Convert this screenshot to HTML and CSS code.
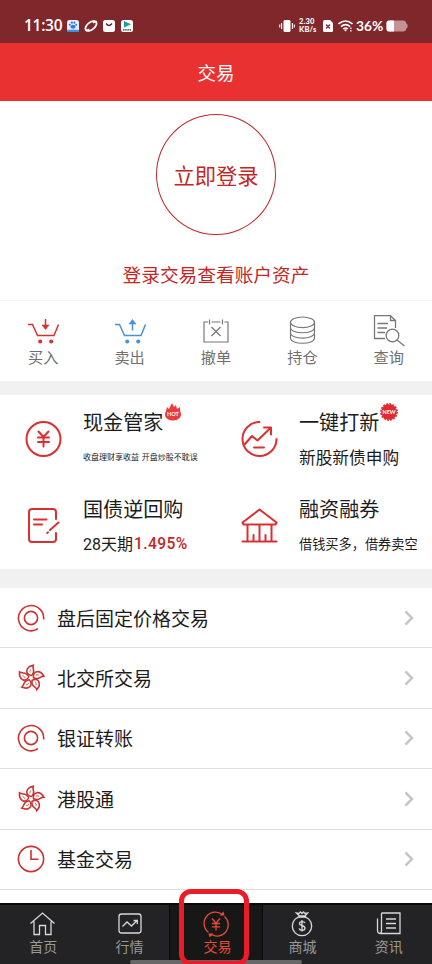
FILE: index.html
```html
<!DOCTYPE html>
<html lang="zh-CN">
<head>
<meta charset="utf-8">
<meta name="viewport" content="width=device-width, initial-scale=1">
<title>交易</title>
<link rel="stylesheet" href="styles.css">
</head>
<body>
<svg class="defs" width="0" height="0">
  <symbol id="ring" viewBox="0 0 28 28"><path d="M26.600 15.500A12.600 12.600 0 1 0 21 24.700"/><circle cx="14" cy="14" r="6.600"/></symbol>
  <symbol id="flower" viewBox="0 0 28 28">
    <g id="petal"><path d="M14.500 11.500C7.500 10.500 8.500 2.800 16.200 1.200C14.800 4.800 19.300 7 14.500 11.500Z"/><path class="fine" d="M13 8.500C12.600 7.300 13 6.300 14 5.500"/></g>
    <use href="#petal" transform="rotate(72 14 14)"/><use href="#petal" transform="rotate(144 14 14)"/><use href="#petal" transform="rotate(216 14 14)"/><use href="#petal" transform="rotate(288 14 14)"/>
  </symbol>
  <symbol id="chevron" viewBox="0 0 10 16"><path d="M1.500 1.500L8 8L1.500 14.500"/></symbol>
</svg>
<div class="phone">
  <div class="status">
    <span class="time">11:30</span>
    <svg class="apps" width="68" height="14" viewBox="0 0 68 14">
      <rect x="1" y="1" width="12" height="12" rx="2.500" fill="#e4efff"/><rect x="1" y="10.800" width="12" height="2.200" rx="1" fill="#438bea"/><ellipse cx="7" cy="7.800" rx="2.600" ry="2" fill="#357bd9"/><g fill="#357bd9"><circle cx="3.800" cy="5.800" r="1"/><circle cx="5.800" cy="3.700" r="1.100"/><circle cx="8.300" cy="3.700" r="1.100"/><circle cx="10.200" cy="5.800" r="1"/></g>
      <ellipse cx="25" cy="7" rx="6.500" ry="3.600" transform="rotate(-38 25 7)" fill="none" stroke="#fff" stroke-width="1.800"/><path d="M19.500 11.500C21 11.500 22 11 23 10M27 4C28.500 3 30 2.500 31 2.500" fill="none" stroke="#fff" stroke-width="1.500"/>
      <rect x="37" y="1" width="12" height="12" rx="2.500" fill="#fff"/><path d="M40 4.500Q43 8.500 46 4.500" fill="none" stroke="#6b2228" stroke-width="1.400"/>
      <rect x="55" y="1" width="12" height="12" rx="2.500" fill="#fff"/><path d="M58 2L65 5.300L58 8.600Z" fill="#21ac63"/><path d="M58 2L60 5.300L58 8.600Z" fill="#168fd8"/><path d="M57 10.800h8" stroke="#666" stroke-width="1.800" stroke-dasharray="1.500 .7"/>
    </svg>
    <svg class="vibrate" width="16" height="14" viewBox="0 0 16 14"><rect x="4.500" y="1" width="7" height="12" rx="1.500" fill="#fff"/><path d="M2.600 4v6M.7 5.500v3M13.400 4v6M15.300 5.500v3" stroke="#fff" stroke-width="1.100"/></svg>
    <span class="speed"><b>2.30</b><b>KB/s</b></span>
    <svg class="sim" width="10" height="12" viewBox="0 0 10 12"><path d="M2 0H7L10 3V10.500Q10 12 8.500 12H1.500Q0 12 0 10.500V2Q0 0 2 0Z" fill="#fff"/><path d="M3 4.500L7 8.500M7 4.500L3 8.500" stroke="#80272c" stroke-width="1.300"/></svg>
    <svg class="wifi" width="15" height="12" viewBox="0 0 15 12"><g fill="none" stroke="#fff" stroke-width="1.600"><path d="M.5 4Q7.500-2 14.500 4M3 6.600Q7.500 2.700 12 6.600M5.200 9Q7.500 7 9.800 9"/></g><path d="M5.800 9.700L7.500 11.500L9.200 9.700Q7.500 8.700 5.800 9.700Z" fill="#fff"/><path d="M12.800 7.500v4" stroke="#fff" stroke-width="1.400" stroke-dasharray="1.500 1"/></svg>
    <span class="percent">36%</span>
    <svg class="battery" width="22" height="12" viewBox="0 0 22 12"><path d="M3 .5H17Q20 .5 20.200 3.200L21.500 4.500V7.500L20.200 8.800Q20 11.500 17 11.500H3Q.5 11.500 .5 9V3Q.5 .5 3 .5Z" fill="#c49295"/><path d="M8 .5H3Q.5 .5 .5 3V9Q.5 11.500 3 11.500H8Z" fill="#fff"/></svg>
  </div>
  <header class="title">交易</header>

  <section class="login">
    <div class="login-button">立即登录</div>
    <p class="login-note">登录交易查看账户资产</p>
  </section>

  <nav class="shortcuts">
    <div class="shortcut"><svg width="34" height="34" viewBox="0 0 34 34" fill="none" stroke="#d8302f" stroke-width="1.500"><path d="M2 10.500H6.500L11.500 21.500H28L32.500 10.500"/><path d="M19.500 5V11"/><path d="M16 11H23L19.500 15.500Z" fill="#d8302f" stroke-width=".6"/><g fill="#d8302f" stroke="none"><circle cx="14.200" cy="27.500" r="2"/><circle cx="25.200" cy="27.500" r="2"/></g></svg><span>买入</span></div>
    <div class="shortcut"><svg width="34" height="34" viewBox="0 0 34 34" fill="none" stroke="#4a90d9" stroke-width="1.500"><path d="M2 10.500H6.500L11.500 21.500H28L32.500 10.500"/><path d="M19.500 9.500V16.500"/><path d="M16 10H23L19.500 5.500Z" fill="#4a90d9" stroke-width=".6"/><g fill="#4a90d9" stroke="none"><circle cx="14.200" cy="27.500" r="2"/><circle cx="25.200" cy="27.500" r="2"/></g></svg><span>卖出</span></div>
    <div class="shortcut"><svg width="34" height="34" viewBox="0 0 34 34" fill="none" stroke="#777" stroke-width="1.200"><path d="M9 8H5V28H29V8H25.500M12.500 8H21.500M10.500 5.500V10.500M23.500 5.500V10.500M12.500 13L21.500 22M21.500 13L12.500 22"/></svg><span>撤单</span></div>
    <div class="shortcut"><svg width="34" height="34" viewBox="0 0 34 34" fill="none" stroke="#777" stroke-width="1.200"><g transform="translate(0 1.500)"><ellipse cx="17.500" cy="6.800" rx="12" ry="5.300"/><path d="M5.500 6.800V22.500C5.500 29.500 29.500 29.500 29.500 22.500V6.800M5.500 12C5.500 19 29.500 19 29.500 12M5.500 17.300C5.500 24.300 29.500 24.300 29.500 17.300"/></g></svg><span>持仓</span></div>
    <div class="shortcut"><svg width="34" height="34" viewBox="0 0 34 34" fill="none" stroke="#777" stroke-width="1.300"><g transform="translate(0 1)"><path d="M13 23.500H2.500V.7H18.500L23.500 5.500V13M18.500 .7V5.500H23.500M5.500 8.500H16M5.500 13H15M5.500 17.500H13"/><circle cx="20.500" cy="20.500" r="6.300"/><path d="M25 25L32.500 31"/></g></svg><span>查询</span></div>
  </nav>

  <section class="features">
    <article class="feature">
      <svg class="feature-icon" viewBox="0 0 38 38"><circle cx="19.500" cy="19" r="17"/><path d="M14.500 11.500L19.500 17L24.500 11.500M19.500 17V26.500M14 17.500H25M14 22H25"/></svg>
      <div class="feature-text"><h2>现金管家<svg class="badge" width="18" height="20" viewBox="0 0 18 20"><path d="M3 4L5 6L8 0L10 4L12 2L13 6L16 4V8C19 13 15 17.500 9 17.500S-1 13 2 8Z" fill="#ed3b3b"/><text x="9" y="12.500">HOT</text></svg></h2><p class="tiny">收盘理财享收益 开盘炒股不耽误</p></div>
    </article>
    <article class="feature">
      <svg class="feature-icon" viewBox="0 0 38 38"><path d="M19.500 2A17 17 0 1 0 36.500 19M5 24L12 16L17.500 20.500L30.500 8M24 7.500H31V14.500M14 27.500H24"/></svg>
      <div class="feature-text"><h2>一键打新<svg class="badge" width="18" height="20" viewBox="0 0 18 20"><circle cx="9" cy="9" r="7.800" fill="#df2d2f"/><circle cx="9" cy="9" r="8.100" fill="none" stroke="#df2d2f" stroke-width="1.600" stroke-dasharray="2 1.180"/><text x="9" y="11">NEW</text></svg></h2><p class="large">新股新债申购</p></div>
    </article>
    <article class="feature">
      <svg class="feature-icon" viewBox="0 0 38 38"><path d="M32 12V5Q32 2 29 2H8Q5 2 5 5V32Q5 35 8 35H29Q32 35 32 32V26M10 12.500H22.500M10 17.500H18M26 23L34.500 15.500M23.200 26L24 25.300"/></svg>
      <div class="feature-text"><h2>国债逆回购</h2><p class="rate">28天期<strong>1.495%</strong></p></div>
    </article>
    <article class="feature">
      <svg class="feature-icon" viewBox="0 0 38 38"><path d="M2.500 34.500H36.500M3.500 17.500H35.500L36.500 15.500L19.500 2.500L2.500 15.500ZM7.500 18V34M31.500 18V34M19.500 18V34M13.500 28V34M25.500 28V34"/></svg>
      <div class="feature-text"><h2>融资融券</h2><p class="small">借钱买多，借券卖空</p></div>
    </article>
  </section>

  <main class="list">
    <div class="row"><svg class="row-icon"><use href="#ring"/></svg><span>盘后固定价格交易</span><svg class="arrow"><use href="#chevron"/></svg></div>
    <div class="row"><svg class="row-icon"><use href="#flower"/></svg><span>北交所交易</span><svg class="arrow"><use href="#chevron"/></svg></div>
    <div class="row"><svg class="row-icon"><use href="#ring"/></svg><span>银证转账</span><svg class="arrow"><use href="#chevron"/></svg></div>
    <div class="row"><svg class="row-icon"><use href="#flower"/></svg><span>港股通</span><svg class="arrow"><use href="#chevron"/></svg></div>
    <div class="row"><svg class="row-icon" viewBox="0 0 28 28"><circle cx="14" cy="14" r="12.600"/><path d="M14 5V14.300H21.500"/></svg><span>基金交易</span><svg class="arrow"><use href="#chevron"/></svg></div>
  </main>

  <nav class="tabs">
    <div class="tab"><svg viewBox="0 0 28 28"><path d="M1.500 13.500L13.500 3L25.500 13.500M5 11.500V24.500H10.500V15.500H16.500V24.500H22V11.500"/></svg><span>首页</span></div>
    <div class="tab"><svg viewBox="0 0 28 28"><rect x="3" y="4" width="22" height="19" rx="2.500"/><path d="M6.500 16.500L11 12L15.500 16L21 10.500M17.500 10.500H21.300V14"/></svg><span>行情</span></div>
    <div class="tab current"><svg viewBox="0 0 28 28"><path d="M20.500 4.500A11.200 11.200 0 0 0 6.500 22.500M9 24.300A11.200 11.200 0 0 0 22.500 6.500M10 8.500L14 13L18 8.500M14 13V20.500M10 13.500H18M10 16.800H18"/><path class="head" d="M17.500 5.500L22.500 5.500L21.500 1.500ZM11.500 23.500H6.500L7.500 27.500Z"/></svg><span>交易</span></div>
    <div class="tab"><svg viewBox="0 0 28 28"><circle cx="14" cy="16" r="9.700"/><path d="M8.500 3L11.500 6H17L19.500 3L17 3.500L15.500 2L14 3.500L12.500 2L11 3.500ZM10.500 7H18M17 13C16 11 11.500 11 11.500 13.500C11.500 16.500 17 15 17 18C17 21 12 21 11 18.500M14 10V21.500"/></svg><span>商城</span></div>
    <div class="tab"><svg viewBox="0 0 28 28"><path d="M6.500 3H25V23.500H5.500Q2.500 23.500 2.500 20.500V8.500M6.500 3V20.500Q6.500 23.500 4.500 23.500M11 9H21M11 13.500H21M11 18H21"/></svg><span>资讯</span></div>
    <i class="home-bar"></i>
    <i class="highlight"></i>
  </nav>
</div>
</body>
</html>
```

FILE: styles.css
```css
* { box-sizing: border-box; }
body { margin: 0; background: #fff; font-family: "Noto Sans CJK SC", sans-serif; color: #1c1c1c; }
h2, p { margin: 0; font-weight: 400; }
svg { flex: none; display: block; }
.defs { position: absolute; }
.phone { width: 432px; height: 964px; overflow: hidden; display: flex; flex-direction: column; }
.phone > * { flex: none; }

.status { height: 43px; padding: 8px 24px 0 24px; display: flex; align-items: center; background: #80272c; color: #fff; font-family: Lato, sans-serif; }
.time { width: 42px; font-family: "Open Sans", sans-serif; font-size: 15.500px; font-weight: 600; line-height: 20px; letter-spacing: -.3px; margin-top: -1px; white-space: nowrap; }
.vibrate { margin-left: auto; }
.speed { width: 19px; margin-left: 4px; display: flex; flex-direction: column; gap: 1px; font-size: 7.500px; line-height: 7px; letter-spacing: .2px; white-space: nowrap; }
.speed b { height: 7px; font-weight: 900; }
.sim { margin-left: 5px; }
.wifi { margin-left: 5px; }
.percent { width: 27px; margin: 0 3px 0 3px; font-size: 13.800px; font-weight: 700; line-height: 20px; }

.title { height: 58px; background: #e93131; color: #fff; font-size: 18.500px; line-height: 59px; text-align: center; }

.login { height: 200px; padding-top: 13px; display: flex; flex-direction: column; align-items: center; border-bottom: 1px solid #f3f3f3; }
.login-button { width: 120px; height: 121px; border: 1.500px solid #bf2b2b; border-radius: 50%; color: #c42626; font-size: 21.300px; line-height: 119px; text-align: center; box-shadow: 0 1px 3px #0000000d; }
.login-note { margin-top: 24px; color: #c42626; font-size: 18.700px; line-height: 30px; }

.shortcuts { height: 80px; padding-top: 13px; display: grid; grid-template-columns: repeat(5, 1fr); }
.shortcut { display: flex; flex-direction: column; align-items: center; font-size: 15.200px; line-height: 20px; color: #707070; }
.shortcut span { margin-top: -2px; }

.features { height: 207px; border-top: 14px solid #f1f1f1; border-bottom: 19px solid #f1f1f1; display: grid; grid-template-columns: 216px 216px; grid-template-rows: 87px 87px; }
.feature { display: flex; align-items: flex-start; padding-left: 24px; }
.feature-icon { width: 38px; height: 38px; margin-top: 25px; fill: none; stroke: #dc3030; stroke-width: 2; stroke-linecap: round; stroke-linejoin: round; }
.feature-text { margin-left: 21px; padding-top: 12px; white-space: nowrap; }
.feature h2 { display: flex; font-size: 20.100px; line-height: 29px; height: 30px; }
.feature p { height: 30px; margin-top: 5px; line-height: 30px; }
.badge { margin: -4px 0 0 1px; overflow: visible; }
.badge text { fill: #fff; font: 700 5.500px Lato, sans-serif; text-anchor: middle; }
.feature .tiny { font-size: 8px; line-height: 29px; word-spacing: 1px; }
.large { font-size: 16.700px; }
.small { font-size: 13.200px; }
.feature .rate { display: flex; font-family: Roboto, "Noto Sans CJK SC", sans-serif; font-size: 16px; font-weight: 400; line-height: 31px; }
.rate strong { margin-left: 1px; color: #c42626; font-size: 15.600px; font-weight: 500; letter-spacing: .4px; }

.list { display: grid; grid-auto-rows: 60.400px; height: 315px; }
.row { display: flex; align-items: center; padding: 0 18px 0 17px; border-bottom: 1px solid #dedede; font-size: 19px; }
.row span { margin-top: -1px; }
.row-icon { width: 28px; height: 28px; margin-right: 12px; fill: none; stroke: #cb3333; stroke-width: 1.600; }
.fine { stroke-width: .8; }
.arrow { width: 10px; height: 16px; margin-left: auto; fill: none; stroke: #c6c6c6; stroke-width: 2.500; }

.tabs { position: relative; height: 61px; display: grid; grid-template-columns: repeat(5, 1fr); background: #232325; border-top: 2px solid #080808; }
.tab { display: flex; flex-direction: column; align-items: center; padding-top: 5px; color: #999; font-size: 14px; line-height: 20px; }
.tab span { margin-top: -2px; }
.tab svg { width: 28px; height: 28px; fill: none; stroke: #d8d8d8; stroke-width: 1.300; }
.tab.current { margin: 0 -4px; background: #171717; border: solid #090909; border-width: 0 1px; color: #e94b36; }
.tab.current svg { stroke: #e94b36; }
.tab.current span { padding-left: 3px; }
.tab .head { fill: #e94b36; stroke: none; }
.home-bar { position: absolute; left: 130px; bottom: 0; width: 172px; height: 4px; border-radius: 2px; background: #686868; }
.highlight { position: absolute; left: 179px; top: -16px; width: 70px; height: 77px; border: 5px solid #e91c27; border-radius: 12px; }
```
